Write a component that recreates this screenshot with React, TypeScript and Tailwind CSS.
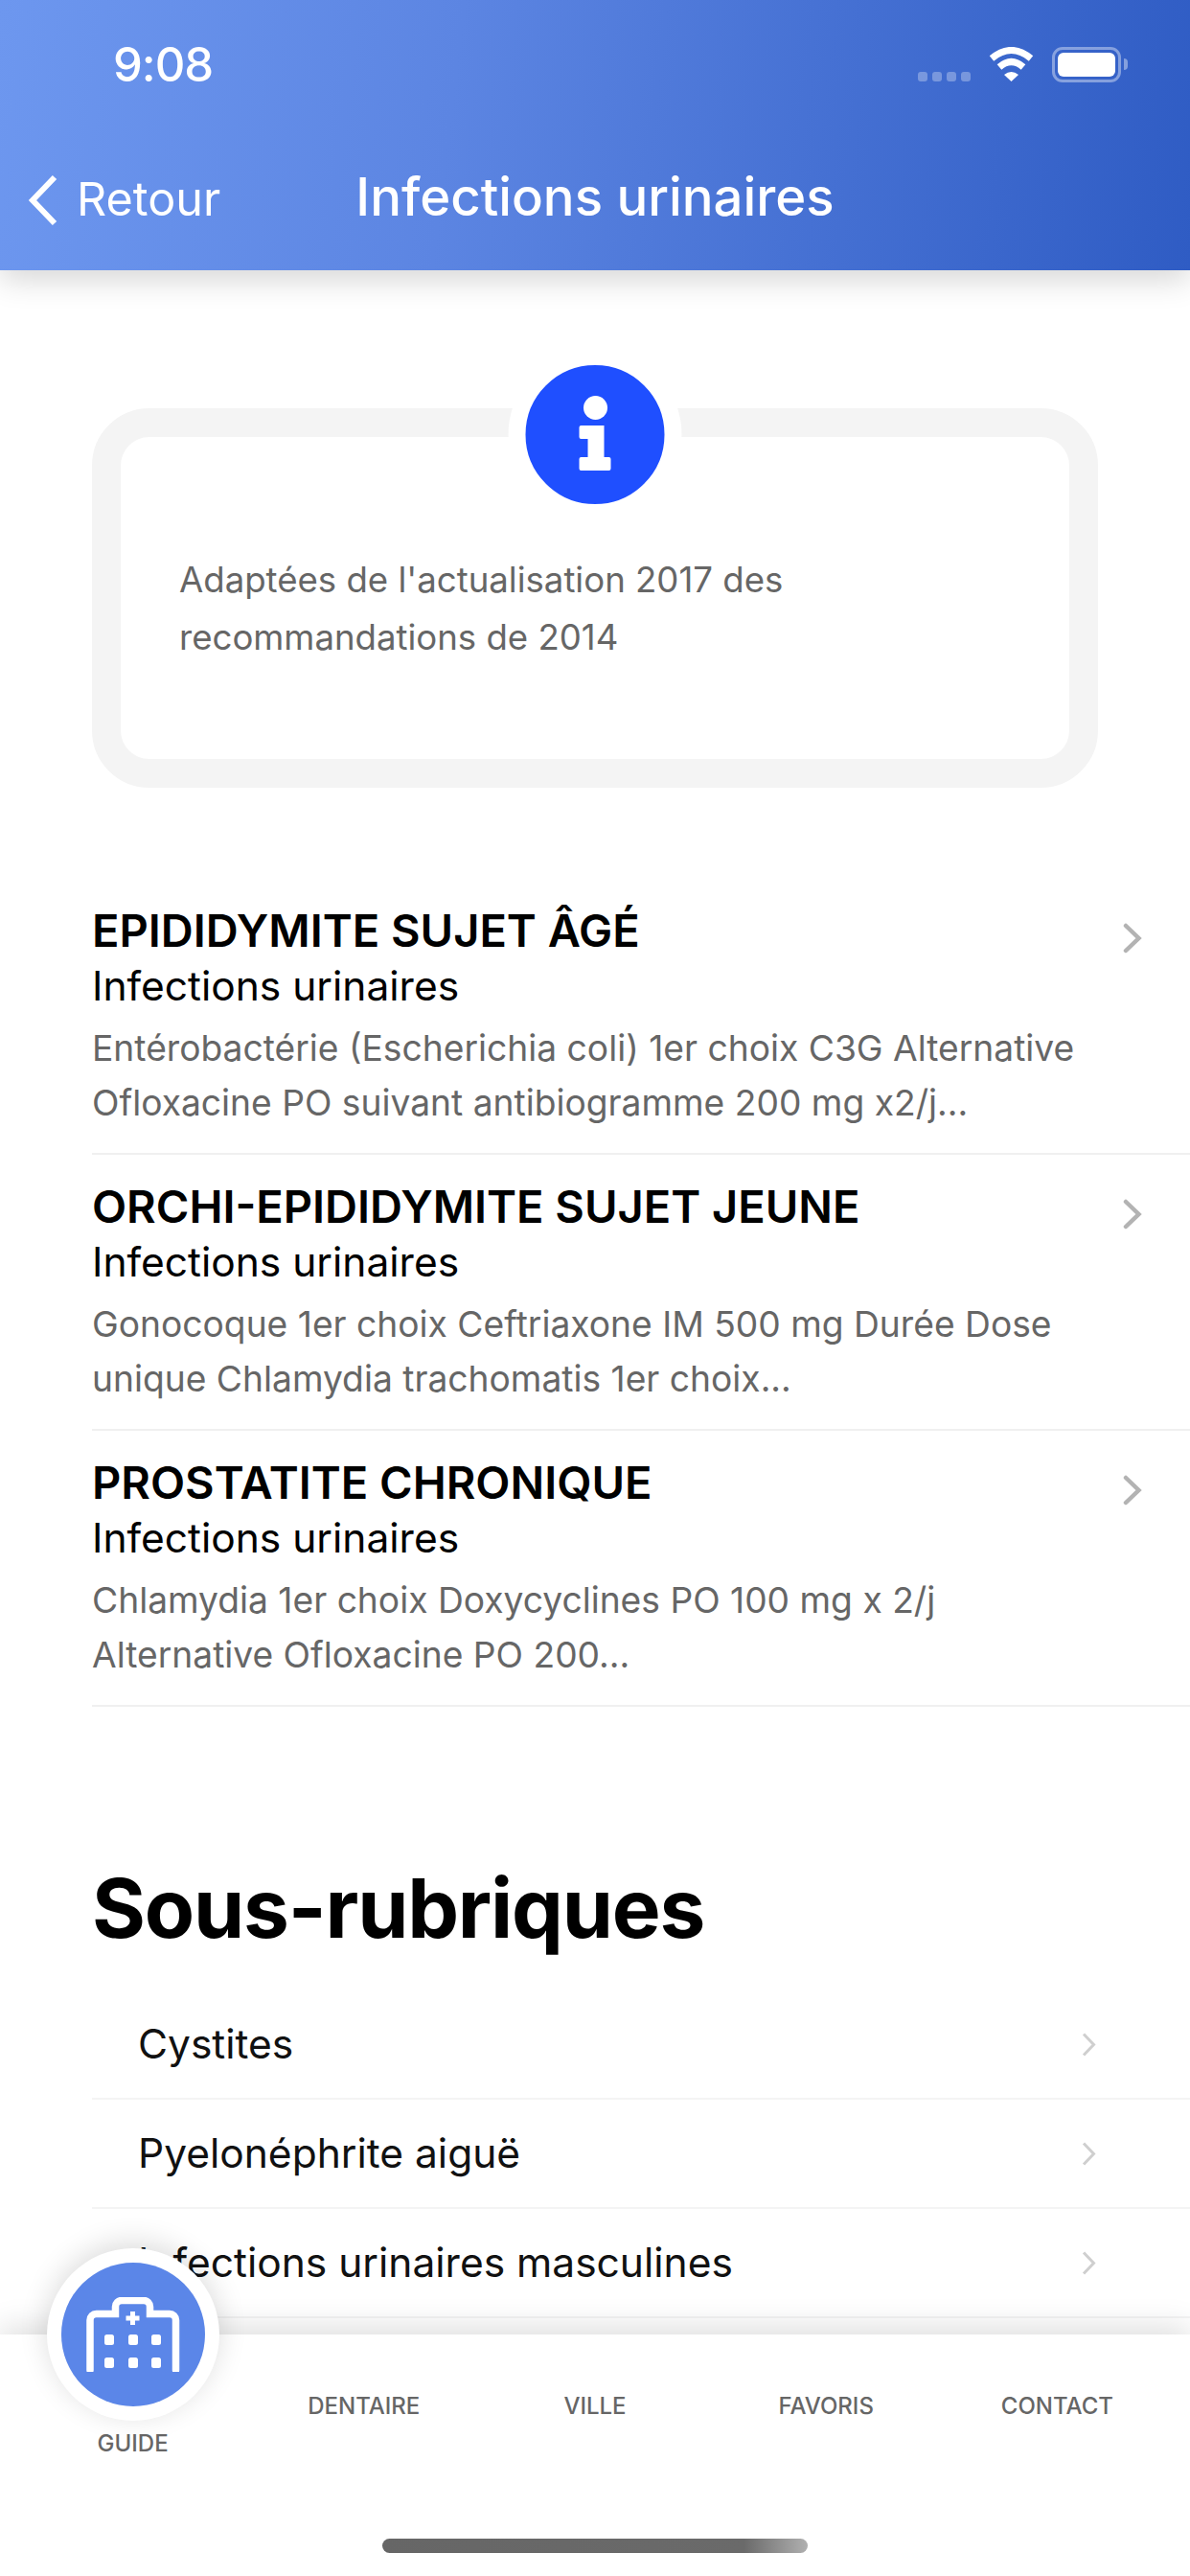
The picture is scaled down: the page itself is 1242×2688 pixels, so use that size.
const protocols = [
  {
    title: "EPIDIDYMITE SUJET ÂGÉ",
    lines: ["Entérobactérie (Escherichia coli) 1er choix C3G Alternative", "Ofloxacine PO suivant antibiogramme 200 mg x2/j..."],
  },
  {
    title: "ORCHI-EPIDIDYMITE SUJET JEUNE",
    lines: ["Gonocoque 1er choix Ceftriaxone IM 500 mg Durée Dose", "unique Chlamydia trachomatis 1er choix..."],
  },
  {
    title: "PROSTATITE CHRONIQUE",
    lines: ["Chlamydia 1er choix Doxycyclines PO 100 mg x 2/j", "Alternative Ofloxacine PO 200..."],
  },
];

const subSections = ["Cystites", "Pyelonéphrite aiguë", "Infections urinaires masculines"];

function StatusBar() {
  return (
    <div className="flex h-[114px] items-center justify-between pl-[118px] pr-[65px] pt-[20px]">
      <span className="text-[49px] font-medium leading-none tracking-[-1px] text-white">9:08</span>
      <div className="flex items-center">
        <div className="mr-[19px] mt-[26px] flex gap-[5px]">
          <span className="h-[10px] w-[10px] rounded-[3px] bg-white/30" />
          <span className="h-[10px] w-[10px] rounded-[3px] bg-white/30" />
          <span className="h-[10px] w-[10px] rounded-[3px] bg-white/30" />
          <span className="h-[10px] w-[10px] rounded-[3px] bg-white/30" />
        </div>
        <svg width="47" height="36" viewBox="0 0 47 36" className="mr-[19px]">
          <path d="M3 12Q23.5-5 44 12" fill="none" stroke="#fff" strokeWidth="7" />
          <path d="M11 21Q23.5 10 36 21" fill="none" stroke="#fff" strokeWidth="7" />
          <path d="M16 29Q23.5 23 31 29L23.5 36Z" fill="#fff" />
        </svg>
        <div className="flex h-[37px] w-[72px] items-center justify-center rounded-[11px] border-[3px] border-white/40">
          <span className="h-[25px] w-[60px] rounded-[6px] bg-white" />
        </div>
        <span className="ml-[3px] h-[12px] w-[4px] rounded-r-full bg-white/40" />
      </div>
    </div>
  );
}

function Header() {
  return (
    <header className="relative z-10 h-[282px] shrink-0 bg-[linear-gradient(97deg,#6d97ef_0%,#5c85e2_38%,#2f5cc4_100%)] shadow-[0_10px_30px_rgba(0,0,0,0.16)]">
      <StatusBar />
      <div className="relative flex h-[168px] items-center justify-center pt-[14px]">
        <div className="absolute left-[29px] top-[68px] flex items-center">
          <svg width="32" height="54" viewBox="0 0 32 54" fill="none">
            <path d="M28 3L5 27L28 51" stroke="#fff" strokeWidth="6" />
          </svg>
          <span className="ml-[19px] mb-[2px] text-[48.5px] leading-none text-white">Retour</span>
        </div>
        <h1 className="text-[54.5px] font-medium leading-none text-white">Infections urinaires</h1>
      </div>
    </header>
  );
}

function InfoCard() {
  return (
    <div className="relative ml-[96px] mr-[96px] mt-[144px] h-[396px] rounded-[60px] border-[30px] border-[#f4f4f4] bg-white">
      <div className="absolute left-1/2 top-[-93px] h-[181px] w-[181px] -translate-x-1/2 rounded-full border-[18px] border-white bg-[#1f4fff]">
        <svg viewBox="0 0 145 145" className="h-full w-full" fill="#fff">
          <circle cx="73" cy="44.5" r="12.5" />
          <path d="M56 65a2 2 0 0 1 2-2h24v33h5a2 2 0 0 1 2 2v10a2 2 0 0 1-2 2H58a2 2 0 0 1-2-2v-10a2 2 0 0 1 2-2h7V77h-7a2 2 0 0 1-2-2z" />
        </svg>
      </div>
      <p className="pl-[61px] pt-[119px] text-[36.6px] leading-[60px] text-[#666]">
        Adaptées de l'actualisation 2017 des
        <br />
        recommandations de 2014
      </p>
    </div>
  );
}

function ProtocolRow({ title, lines }: { title: string; lines: string[] }) {
  return (
    <div className="flex h-[288px] justify-between border-b-[2px] border-[#f0f0f0] pr-[50px] pt-[25px]">
      <div>
        <div className="text-[47px] font-semibold leading-[58px] text-black">{title}</div>
        <div className="text-[42.5px] leading-[58px] text-black">Infections urinaires</div>
        <div className="mt-[7px] text-[37.2px] leading-[57px] text-[#666]">
          {lines[0]}
          <br />
          {lines[1]}
        </div>
      </div>
      <svg width="20" height="32" viewBox="0 0 20 32" fill="none" className="mt-[21px]">
        <path d="M3 3L16.5 16L3 29" stroke="#b3b3b3" strokeWidth="4.5" strokeLinecap="round" />
      </svg>
    </div>
  );
}

function SubRow({ label }: { label: string }) {
  return (
    <div className="ml-[96px] flex h-[114px] items-center justify-between border-b-[2px] border-[#f4f4f4] pl-[48px] pr-[98px]">
      <span className="text-[42.5px] leading-none text-[#111]">{label}</span>
      <svg width="15" height="25" viewBox="0 0 15 25" fill="none">
        <path d="M2 1.5L12.5 12.5L2 23.5" stroke="#cfcfcf" strokeWidth="3" />
      </svg>
    </div>
  );
}

function TabBar() {
  return (
    <nav className="relative z-10 h-[252px] shrink-0 bg-white shadow-[0_-8px_30px_rgba(0,0,0,0.13)]">
      <div className="grid grid-cols-5 px-[18px] pt-[63px] text-center text-[24px] font-medium leading-[24px] text-[#666]">
        <div className="relative pt-[39px]">
          <div className="absolute left-[31px] top-[-153px] flex h-[180px] w-[180px] items-center justify-center rounded-full bg-white shadow-[0_-6px_30px_rgba(0,0,0,0.14)]">
            <div className="flex h-[150px] w-[150px] items-center justify-center rounded-full bg-[#5b86e8]">
              <svg width="98" height="78" viewBox="0 0 98 78" fill="none">
                <path d="M4 76V24a6.5 6.5 0 0 1 6.5-6.5H30.5V10a6.5 6.5 0 0 1 6.5-6.5H60a6.5 6.5 0 0 1 6.5 6.5V17.5H87a6.5 6.5 0 0 1 6.5 6.5V76" stroke="#fff" strokeWidth="7.5" strokeLinecap="round" />
                <path d="M48.5 15v14M41.5 22h14" stroke="#fff" strokeWidth="5" />
                <g fill="#fff">
                  <rect x="19" y="39" width="10" height="11" rx="2.5" />
                  <rect x="44" y="39" width="10" height="11" rx="2.5" />
                  <rect x="68" y="39" width="10" height="11" rx="2.5" />
                  <rect x="19" y="63" width="10" height="11" rx="2.5" />
                  <rect x="44" y="63" width="10" height="11" rx="2.5" />
                  <rect x="68" y="63" width="10" height="11" rx="2.5" />
                </g>
              </svg>
            </div>
          </div>
          GUIDE
        </div>
        <div>DENTAIRE</div>
        <div>VILLE</div>
        <div>FAVORIS</div>
        <div>CONTACT</div>
      </div>
      <div className="mx-auto mt-[87px] h-[15px] w-[444px] rounded-full bg-[linear-gradient(90deg,#666_0%,#6a6a6a_85%,#b0b0b0_100%)]" />
    </nav>
  );
}

export default function App() {
  return (
    <div className="flex h-[2688px] w-[1242px] flex-col overflow-hidden bg-white font-['Inter',sans-serif]">
      <Header />
      <main className="flex-1 overflow-hidden">
        <InfoCard />
        <section className="ml-[96px] mt-[95px]">
          {protocols.map((p) => (
            <ProtocolRow key={p.title} title={p.title} lines={p.lines} />
          ))}
        </section>
        <h2 className="ml-[96px] mt-[160px] text-[85.5px] font-bold leading-[100px] tracking-[-1.2px] text-black">Sous-rubriques</h2>
        <section className="mt-[36px]">
          {subSections.map((label) => (
            <SubRow key={label} label={label} />
          ))}
        </section>
      </main>
      <TabBar />
    </div>
  );
}
